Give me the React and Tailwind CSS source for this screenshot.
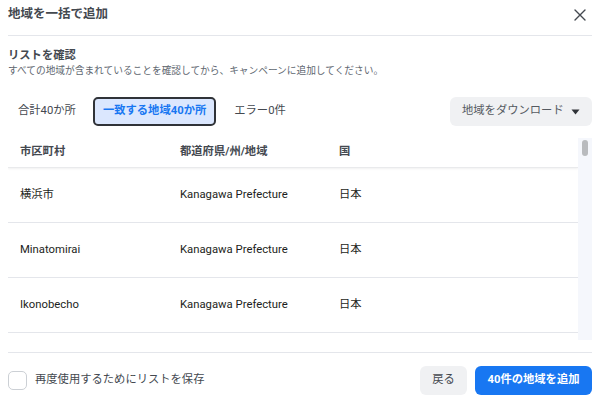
import React from 'react';

const rows = [
  { city: '横浜市', region: 'Kanagawa Prefecture', country: '日本' },
  { city: 'Minatomirai', region: 'Kanagawa Prefecture', country: '日本' },
  { city: 'Ikonobecho', region: 'Kanagawa Prefecture', country: '日本' },
];

export default function App() {
  return (
    <div className="w-[600px] h-[403px] bg-white text-[#1c1e21] font-['Roboto','Noto_Sans_CJK_JP',sans-serif] flex flex-col overflow-hidden">
      {/* header */}
      <div className="mx-2 h-[36px] pb-[6px] border-b border-[#e4e6eb] flex items-center justify-between">
        <h2 className="text-[12.5px] font-bold text-[#444950]">地域を一括で追加</h2>
        <button className="w-5 h-5 mr-[2px] flex items-center justify-center text-[#444950]">
          <svg width="12" height="12" viewBox="0 0 12 12" fill="none" stroke="currentColor" strokeWidth="1.4" strokeLinecap="round">
            <path d="M1 1L11 11M11 1L1 11" />
          </svg>
        </button>
      </div>

      {/* intro */}
      <div className="px-2 pt-[12px]">
        <p className="text-[11.3px] leading-[16px] font-bold text-[#444950]">リストを確認</p>
        <p className="text-[9.7px] leading-[14px] text-[#606770]">すべての地域が含まれていることを確認してから、キャンペーンに追加してください。</p>
      </div>

      {/* tabs */}
      <div className="mt-[19px] mx-2 flex items-center justify-between h-[29px]">
        <div className="flex items-center text-[11.3px] text-[#444950]">
          <span className="px-[10px]">合計40か所</span>
          <button className="ml-[7px] h-[29px] px-[8px] rounded-[5px] border-2 border-[#303338] bg-[#dbe7fe] text-[#1877f2] font-bold">
            一致する地域40か所
          </button>
          <span className="ml-[18px]">エラー0件</span>
        </div>
        <button className="w-[142px] h-[29px] rounded-[6px] bg-[#f0f1f3] flex items-center justify-between pl-[12px] pr-[12px] text-[11.3px] text-[#555a61]">
          <span>地域をダウンロード</span>
          <svg width="9" height="6" viewBox="0 0 9 6" fill="#303338"><path d="M0.5 0.5h8L4.5 5.5z" /></svg>
        </button>
      </div>

      {/* table */}
      <div className="mt-[12px] ml-2 mr-2 h-[202px] flex overflow-hidden">
        <div className="flex-1 flex flex-col">
          <div className="grid grid-cols-[160px_159px_1fr] h-[30px] shrink-0 items-center text-[11.3px] font-bold text-[#444950] border-b border-[#e9eaec] shadow-[0_1px_2px_rgba(0,0,0,0.06)]">
            <span className="pl-3">市区町村</span>
            <span className="pl-3">都道府県/州/地域</span>
            <span className="pl-3">国</span>
          </div>
          {rows.map((r, i) => (
            <div key={i} className="grid grid-cols-[160px_159px_1fr] h-[55px] shrink-0 items-center text-[11.3px] text-[#1c1e21] border-b border-[#e4e6eb]">
              <span className="pl-3">{r.city}</span>
              <span className="pl-3">{r.region}</span>
              <span className="pl-3">{r.country}</span>
            </div>
          ))}
        </div>
        <div className="w-[14px] bg-[#f5f7fc] flex justify-center pt-[2px]">
          <div className="w-[6px] h-[16px] rounded-full bg-[#b9bbbe]" />
        </div>
      </div>

      {/* footer */}
      <div className="mx-2 mt-[12px] border-t border-[#e4e6eb] flex-1 flex items-center justify-between pt-[4px]">
        <label className="flex items-center gap-2 text-[11.3px] text-[#444950]">
          <span className="w-[19px] h-[19px] rounded-[5px] border border-[#ccd0d5] bg-white" />
          再度使用するためにリストを保存
        </label>
        <div className="flex items-center gap-2">
          <button className="h-[29px] w-[47px] rounded-[6px] bg-[#f0f1f3] text-[11.3px] text-[#444950]">戻る</button>
          <button className="h-[29px] w-[117px] rounded-[6px] bg-[#1877f2] text-[11.3px] font-bold text-white">40件の地域を追加</button>
        </div>
      </div>
    </div>
  );
}
